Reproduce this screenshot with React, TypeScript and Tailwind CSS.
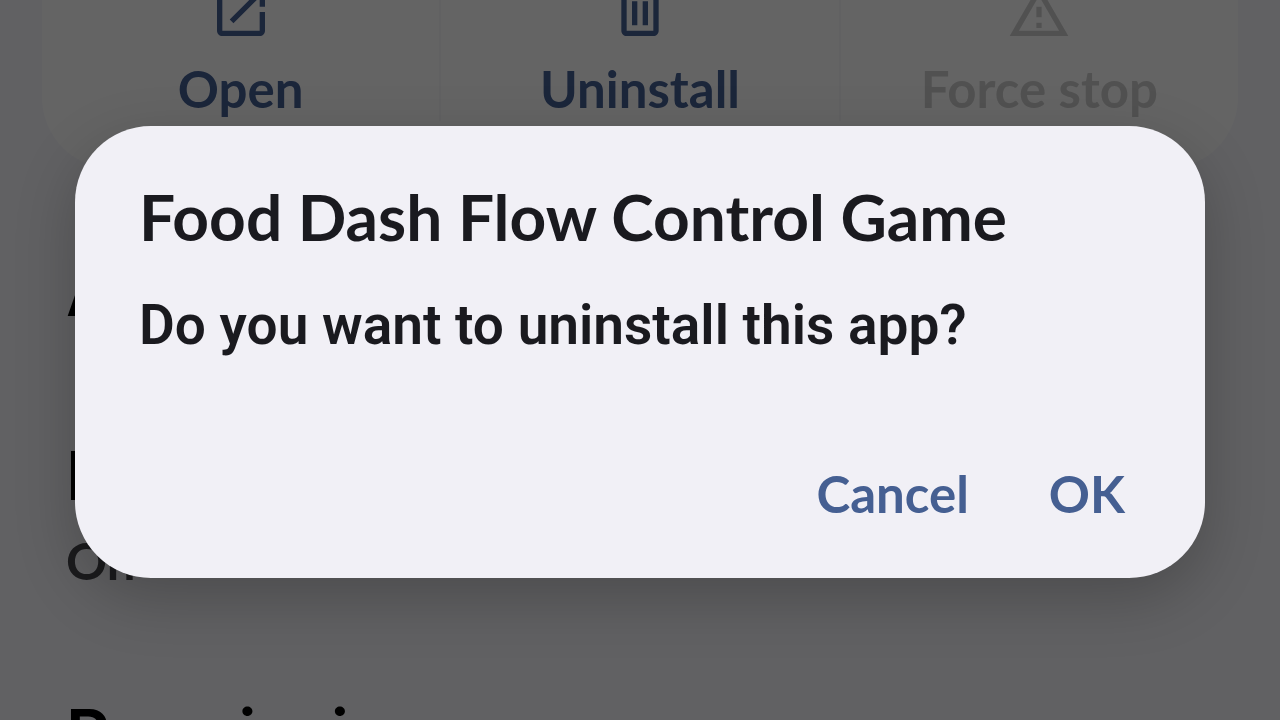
import React, { useState } from 'react';

interface ActionProps {
  label: string;
  disabled?: boolean;
  children: React.ReactNode;
}

const ActionButton: React.FC<ActionProps> = ({ label, disabled, children }) => (
  <button
    type="button"
    disabled={disabled}
    className="flex flex-1 flex-col items-center gap-[13px] text-[#455f92] disabled:text-[#cbcbcb]"
  >
    <svg viewBox="0 0 24 24" fill="currentColor" aria-hidden="true" className="h-16 w-16">
      {children}
    </svg>
    <span className="text-[51px] leading-[64px] font-bold">{label}</span>
  </button>
);

const sections = [
  { title: 'App settings' },
  { title: 'Notifications', value: 'On' },
  { title: 'Permissions' },
];

const AppInfo: React.FC = () => (
  <main className="-mt-5 px-[42px]">
    <div className="flex divide-x-2 divide-[#f3f3f6] rounded-b-[72px] bg-[#fbfbfb] pb-12">
      <ActionButton label="Open">
        <path d="M19 19H5V5h7V3H5c-1.11 0-2 .9-2 2v14c0 1.1.89 2 2 2h14c1.1 0 2-.9 2-2v-7h-2v7zM14 3v2h3.59l-9.83 9.83 1.41 1.41L19 6.41V10h2V3h-7z" />
      </ActionButton>
      <ActionButton label="Uninstall">
        <path d="M7 21c-1.1 0-2-.9-2-2V6H4V4h5V3h6v1h5v2h-1v13c0 1.1-.9 2-2 2H7zM17 6H7v13h10V6zM9 17h2V8H9v9zm4 0h2V8h-2v9z" />
      </ActionButton>
      <ActionButton label="Force stop" disabled>
        <path d="M12 5.99L19.53 19H4.47L12 5.99M12 2L1 21h22L12 2zm1 14h-2v2h2v-2zm0-6h-2v4h2v-4z" />
      </ActionButton>
    </div>
    <div className="flex flex-col gap-[104px] px-6 pt-[82px]">
      {sections.map(s => (
        <section key={s.title}>
          <h2 className="font-[Inter] text-[68px] leading-[80px] font-semibold text-black">{s.title}</h2>
          {s.value && <p className="mt-[18px] text-[51px] leading-[56px] font-bold text-[#44444a]">{s.value}</p>}
        </section>
      ))}
    </div>
  </main>
);

const UninstallDialog: React.FC<{ onClose: () => void }> = ({ onClose }) => (
  <div className="absolute inset-0 flex items-center justify-center bg-black/60 px-[75px] pb-4">
    <div
      role="dialog"
      aria-labelledby="dialog-title"
      className="w-full rounded-[76px] bg-[#f1f0f6] px-16 pt-[51px] pb-11 shadow-[0_20px_60px_rgba(0,0,0,0.22)]"
    >
      <h1 id="dialog-title" className="text-[64px] leading-[80px] font-bold text-[#1a1a1f]">
        Food Dash Flow Control Game
      </h1>
      <p className="mt-8 font-[Roboto] text-[55px] leading-[72px] font-semibold text-[#1a1a1f]">
        Do you want to uninstall this app?
      </p>
      <div className="mt-[93px] flex justify-end gap-20 pr-4 text-[51px] leading-[80px] font-bold text-[#455f92]">
        <button type="button" onClick={onClose}>Cancel</button>
        <button type="button" onClick={onClose}>OK</button>
      </div>
    </div>
  </div>
);

export default function App() {
  const [open, setOpen] = useState(true);

  return (
    <div className="relative flow-root h-screen overflow-hidden bg-[#f3f3f8] font-[Lato,sans-serif]">
      <AppInfo />
      {open && <UninstallDialog onClose={() => setOpen(false)} />}
    </div>
  );
}
